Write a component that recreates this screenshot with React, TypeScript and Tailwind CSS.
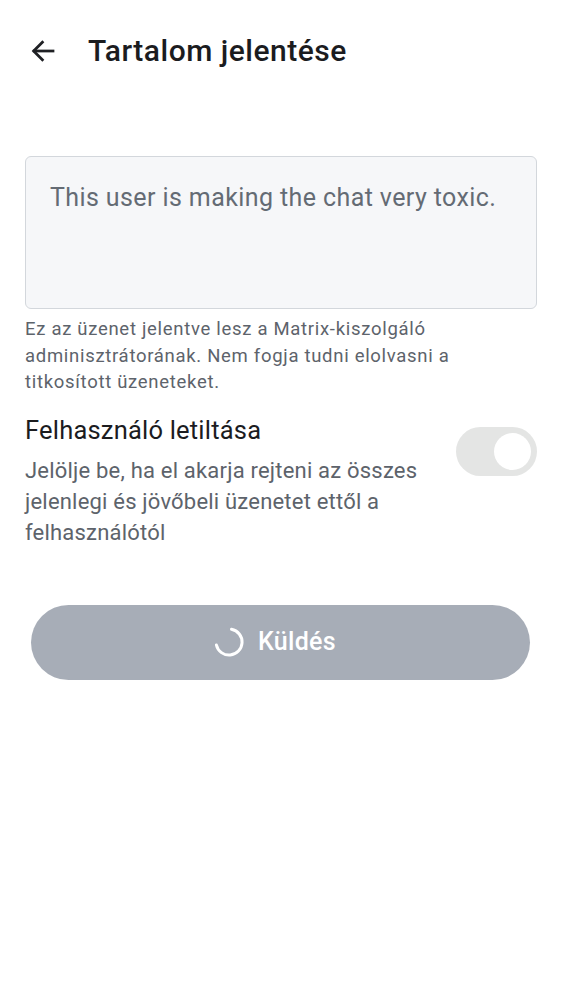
export default function App() {
  return (
    <div className="w-[562px] h-[1000px] bg-white" style={{ fontFamily: "Roboto, 'Noto Sans', sans-serif" }}>
      <header className="flex items-center h-[100px] pl-[28px]">
        <svg width="30" height="30" viewBox="0 0 24 24" fill="none" stroke="#1f2024" strokeWidth="2.2" strokeLinecap="square" className="mt-[1px]">
          <path d="M20 12H5" />
          <path d="M11.5 5L4.5 12l7 7" />
        </svg>
        <h1 className="ml-[30px] text-[30px] font-medium text-[#1b1c1f] tracking-[0.5px]">Tartalom jelentése</h1>
      </header>

      <div className="px-[25px] pt-[56px]">
        <div className="h-[153px] rounded-[6px] border border-[#d3d7dc] bg-[#f6f7f9] px-[24px] pt-[24px]">
          <p className="text-[25px] text-[#646b74] leading-[34px] tracking-[0.4px]">This user is making the chat very toxic.</p>
        </div>
        <p className="mt-[7px] text-[18.5px] leading-[26.5px] text-[#5d636b] tracking-[0.7px]">
          Ez az üzenet jelentve lesz a Matrix-kiszolgáló adminisztrátorának. Nem fogja tudni elolvasni a titkosított üzeneteket.
        </p>

        <div className="mt-[18px] flex items-start justify-between">
          <div className="w-[415px]">
            <div className="text-[25.5px] leading-[32px] text-[#1b1c1f] tracking-[0.2px]">Felhasználó letiltása</div>
            <div className="mt-[9px] text-[22px] leading-[31px] text-[#5d636b] tracking-[0.2px]">
              Jelölje be, ha el akarja rejteni az összes jelenlegi és jövőbeli üzenetet ettől a felhasználótól
            </div>
          </div>
          <div className="mt-[13px] w-[81px] h-[49px] rounded-full bg-[#e4e5e4] flex items-center justify-end pr-[6px]">
            <div className="w-[37px] h-[37px] rounded-full bg-white" />
          </div>
        </div>

        <button className="mt-[57px] ml-[6px] w-[499px] h-[75px] rounded-full bg-[#a7adb7] flex items-center justify-center gap-[13px] pr-[12px]">
          <svg width="32" height="32" viewBox="0 0 32 32" fill="none" stroke="white" strokeWidth="3" strokeLinecap="round">
            <path d="M18.5 3.3 A13 13 0 1 1 3.4 19" />
          </svg>
          <span className="text-[25px] font-medium text-white tracking-[0.3px]">Küldés</span>
        </button>
      </div>
    </div>
  );
}
